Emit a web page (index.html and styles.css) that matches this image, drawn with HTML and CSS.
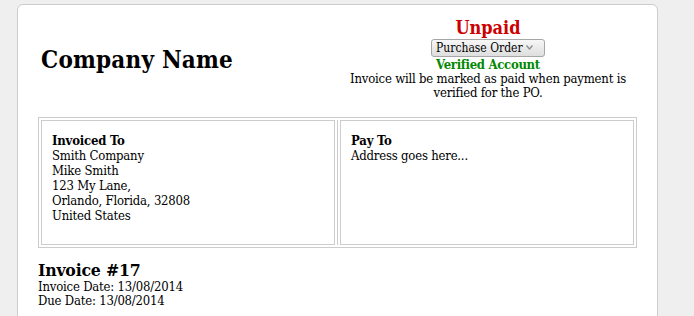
FILE: index.html
```html
<!DOCTYPE html>
<html lang="en">
  <head>
    <meta charset="UTF-8" />
    <meta name="viewport" content="width=device-width, initial-scale=1.0" />
    <title>Invoice #17</title>
    <link rel="stylesheet" href="styles.css">
  </head>
  <body>
    <div class="wrapper">
      <div class="header">
        <div class="brand">
          <h1>Company Name</h1>
        </div>
        <div class="status">
          <div class="unpaid">Unpaid</div>
          <span class="select-wrap">
            <select name="gateway">
              <option>Purchase Order</option>
            </select>
            <svg class="chevron" width="7" height="5" viewBox="0 0 7 5"><path d="M0.5 0.5 L3.5 4 L6.5 0.5" fill="none" stroke="#8c8c8c" stroke-width="1.3"/></svg>
          </span>
          <div class="verified">Verified Account</div>
          <div class="note">Invoice will be marked as paid when payment is verified for the PO.</div>
        </div>
      </div>

      <div class="addresses">
        <div class="addressbox">
          <strong>Invoiced To</strong><br />
          Smith Company<br />
          Mike Smith<br />
          123 My Lane,<br />
          Orlando, Florida, 32808<br />
          United States
        </div>
        <div class="divider"></div>
        <div class="addressbox">
          <strong>Pay To</strong><br />
          Address goes here...
        </div>
      </div>

      <h2>Invoice #17</h2>
      <div class="dates">
        Invoice Date: 13/08/2014<br />
        Due Date: 13/08/2014
      </div>
    </div>
  </body>
</html>
```

FILE: styles.css
```css
body {
  margin: 0;
  background: #efefef;
  font-family: "DejaVu Serif Condensed", "DejaVu Serif", serif;
  color: #000;
}
.wrapper {
  box-sizing: border-box;
  width: 641px;
  min-height: 400px;
  margin: 4px 0 0 17px;
  padding: 13px 20px 20px;
  background: #fff;
  border: 1px solid #cccccc;
  border-radius: 6px;
  letter-spacing: -0.2px;
}
.header {
  display: flex;
  align-items: center;
  margin-bottom: 17px;
}
.brand {
  width: 50%;
  padding-left: 3px;
}
h1 {
  margin: 0;
  font-size: 24px;
  font-weight: bold;
  letter-spacing: 0.2px;
}
.status {
  width: 50%;
  text-align: center;
  font-size: 13px;
  line-height: 15px;
}
.unpaid {
  color: #cc0000;
  font-size: 18px;
  font-weight: bold;
  line-height: 20px;
  letter-spacing: 0;
}
.select-wrap {
  display: inline-block;
  position: relative;
  margin-top: 1px;
  vertical-align: top;
}
select {
  -webkit-appearance: none;
  appearance: none;
  box-sizing: border-box;
  width: 114px;
  height: 18px;
  margin: 0;
  padding: 0 0 0 4px;
  font-family: "DejaVu Serif Condensed", "DejaVu Serif", serif;
  font-size: 12px;
  line-height: 15px;
  color: #000;
  background: linear-gradient(#f7f7f7, #dedede);
  border: 1px solid #a6a6a6;
  border-radius: 3px;
}
.chevron {
  position: absolute;
  top: 6px;
  right: 12px;
}
.verified {
  color: #008800;
  font-weight: bold;
  letter-spacing: -0.3px;
}
.note {
  line-height: 14px;
}
.addresses {
  display: flex;
  padding: 2px;
  border: 1px solid #cccccc;
  font-size: 13px;
  line-height: 15px;
}
.addressbox {
  flex: 1;
  padding: 12px 10px 21px;
  border: 1px solid #cccccc;
}
.divider {
  width: 1px;
  margin: 0 2px;
  background: #cccccc;
}
h2 {
  margin: 12px 0 0;
  font-size: 17.5px;
  line-height: 20px;
}
.dates {
  font-size: 13px;
  line-height: 13.5px;
}
```
